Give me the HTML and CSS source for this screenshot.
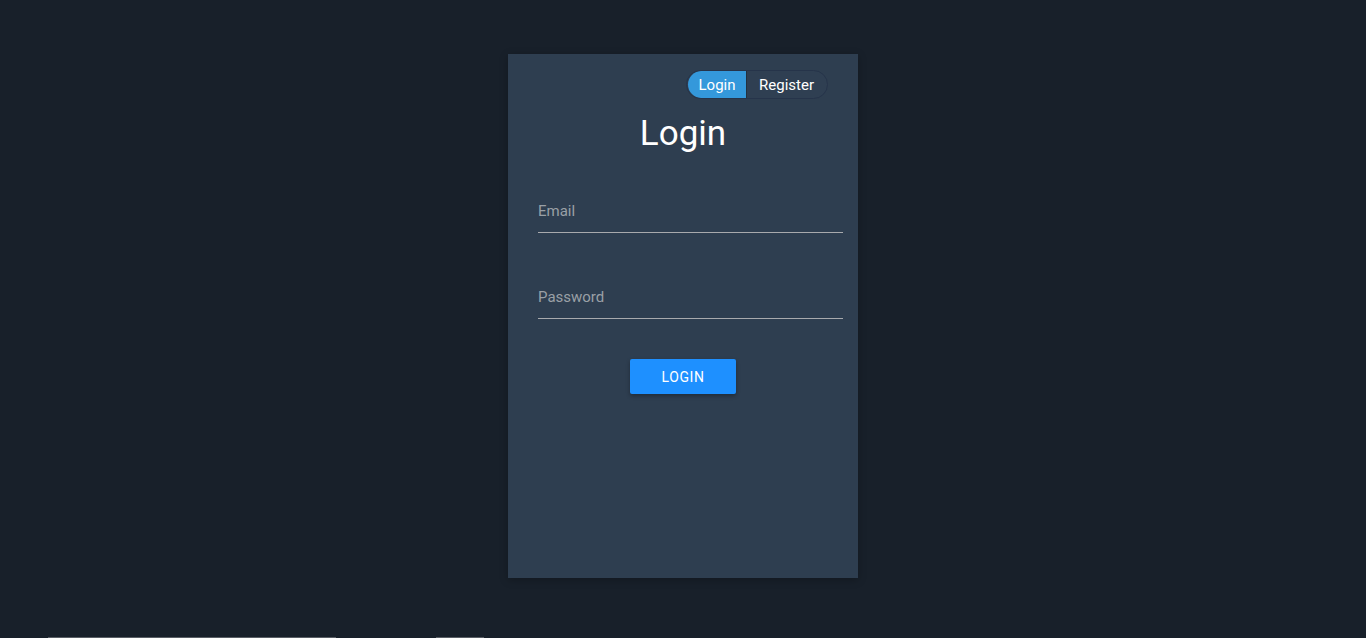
FILE: index.html
```html
<html><head>
<link rel="stylesheet" href="styles.css">
</head>
<body>
  <div class="page">
    <div class="card">
      <div class="switch-row">
        <div class="switch">
          <span class="switch-btn active">Login</span>
          <span class="switch-btn">Register</span>
        </div>
      </div>
      <h1>Login</h1>
      <form class="form">
        <label class="field">
          <input type="email" placeholder="Email">
        </label>
        <label class="field">
          <input type="password" placeholder="Password">
        </label>
        <div class="actions">
          <button type="button" class="login-btn">LOGIN</button>
        </div>
      </form>
    </div>
  </div>
  <div class="footer">
    <div class="footer-bar wide"></div>
    <div class="footer-bar small"></div>
  </div>
</body></html>
```

FILE: styles.css
```css
:root {
  --background: #18202a;
  --card: #2e3e50;
  --primary: #1e90ff;
  --toggle: #3498db;
  --text: #ffffff;
  --muted: #9aa0a6;
}

html, body {
  margin: 0;
  padding: 0;
}

body {
  background: var(--background);
  color: var(--text);
  font-family: Roboto, "Noto Sans", sans-serif;
  height: 638px;
  overflow: hidden;
  display: flex;
  flex-direction: column;
}

.page {
  display: flex;
  justify-content: center;
  padding-top: 54px;
  height: 583px;
  box-sizing: border-box;
}

.card {
  width: 350px;
  height: 524px;
  background: var(--card);
  box-sizing: border-box;
  padding: 16px 15px 0 30px;
  box-shadow: 0 2px 8px rgba(0,0,0,0.25);
}

.switch-row {
  display: flex;
  justify-content: flex-end;
  padding-right: 15px;
}

.switch {
  display: flex;
  border: 1px solid #26344a;
  border-radius: 15px;
  overflow: hidden;
  height: 27px;
  padding: 0 1px;
  background: #2f3f52;
}

.switch-btn {
  display: flex;
  align-items: center;
  justify-content: center;
  font-size: 15px;
  color: var(--text);
  width: 79px;
}

.switch-btn.active {
  background: var(--toggle);
  border-right: 1px solid #22303f;
  border-radius: 14px 0 0 14px;
  width: 58px;
}

h1 {
  font-weight: 400;
  font-size: 35px;
  text-align: center;
  margin: 13px 0 0 -15px;
  line-height: 44px;
}

.form {
  margin-top: 40px;
}

.field {
  display: block;
  margin-bottom: 49px;
}

.field input {
  width: 305px;
  background: transparent;
  border: none;
  border-bottom: 1px solid #a8aaad;
  color: var(--text);
  font-family: inherit;
  font-size: 15px;
  padding: 6px 0 12px 0;
  outline: none;
  display: block;
}

.field input::placeholder {
  color: var(--muted);
}

.actions {
  display: flex;
  justify-content: center;
  margin-left: -15px;
  margin-top: -9px;
}

.login-btn {
  width: 106px;
  height: 35px;
  background: var(--primary);
  color: var(--text);
  border: none;
  border-radius: 2px;
  font-family: inherit;
  font-size: 14px;
  font-weight: 400;
  letter-spacing: 0.6px;
  box-shadow: 0 2px 4px rgba(0,0,0,0.3);
  cursor: pointer;
}

.footer {
  display: flex;
  gap: 100px;
  padding: 54px 0 0 48px;
}

.footer-bar {
  height: 1px;
  background: #5a5f66;
}

.footer-bar.wide {
  width: 288px;
}

.footer-bar.small {
  width: 48px;
}
```
